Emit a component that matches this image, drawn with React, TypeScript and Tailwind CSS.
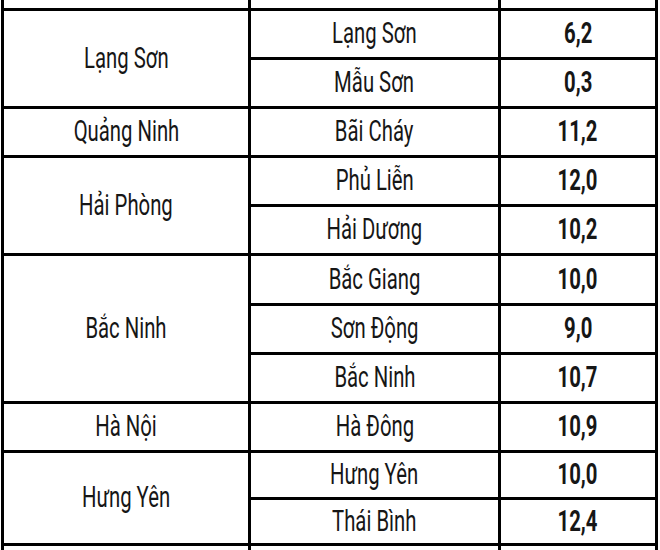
// Rainfall table: province / station / value, black 3px rules, narrow Roboto text.
import { Fragment } from 'react'

type Row = { station: string; value: string }
type Group = { province: string; rows: Row[] }

const GROUPS: Group[] = [
  { province: 'Lạng Sơn', rows: [{ station: 'Lạng Sơn', value: '6,2' }, { station: 'Mẫu Sơn', value: '0,3' }] },
  { province: 'Quảng Ninh', rows: [{ station: 'Bãi Cháy', value: '11,2' }] },
  { province: 'Hải Phòng', rows: [{ station: 'Phủ Liễn', value: '12,0' }, { station: 'Hải Dương', value: '10,2' }] },
  {
    province: 'Bắc Ninh',
    rows: [
      { station: 'Bắc Giang', value: '10,0' },
      { station: 'Sơn Động', value: '9,0' },
      { station: 'Bắc Ninh', value: '10,7' },
    ],
  },
  { province: 'Hà Nội', rows: [{ station: 'Hà Đông', value: '10,9' }] },
  { province: 'Hưng Yên', rows: [{ station: 'Hưng Yên', value: '10,0' }, { station: 'Thái Bình', value: '12,4' }] },
]

const SPAN: Record<number, string> = { 1: 'row-span-1', 2: 'row-span-2', 3: 'row-span-3' }

function Txt({ children, bold }: { children: string; bold?: boolean }) {
  return (
    <span className={`inline-block scale-x-[0.7] whitespace-nowrap text-[29px] text-[#161616] ${bold ? 'font-bold' : 'font-normal'}`}>
      {children}
    </span>
  )
}

function Cell({ children, className = '' }: { children?: React.ReactNode; className?: string }) {
  return <div className={`flex items-center justify-center overflow-hidden bg-white ${className}`}>{children}</div>
}

export default function App() {
  return (
    <div className="h-[550px] w-[660px] overflow-hidden bg-white" style={{ fontFamily: 'Roboto, "Noto Sans", sans-serif' }}>
      <div className="ml-[1px] grid w-[657px] grid-cols-[244px_247px_154px] grid-rows-[8px_46px_46px_46px_46px_46px_47px_46px_46px_46px_44px_43px_10px] gap-[3px] bg-black px-[3px]">
        {/* cut-off row above */}
        <Cell />
        <Cell />
        <Cell />
        {GROUPS.map((g) =>
          g.rows.map((r, i) => (
            <Fragment key={g.province + r.station}>
              {i === 0 && (
                <Cell className={SPAN[g.rows.length]}>
                  <Txt>{g.province}</Txt>
                </Cell>
              )}
              <Cell>
                <Txt>{r.station}</Txt>
              </Cell>
              <Cell>
                <Txt bold>{r.value}</Txt>
              </Cell>
            </Fragment>
          )),
        )}
        {/* cut-off row below */}
        <Cell />
        <Cell />
        <Cell />
      </div>
    </div>
  )
}
